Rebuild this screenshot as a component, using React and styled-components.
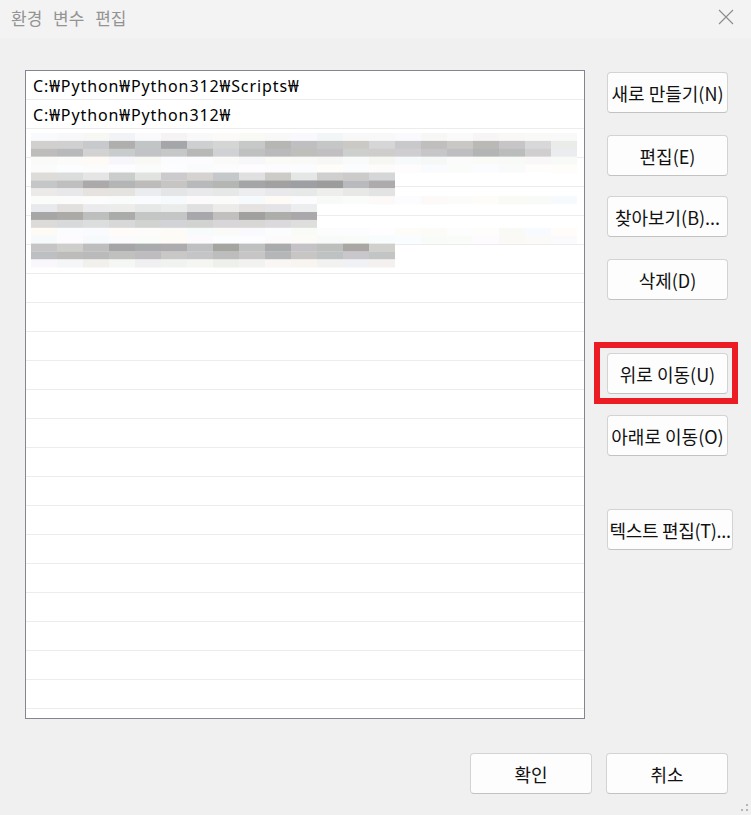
import React from "react";
import styled, { createGlobalStyle } from "styled-components";

const Global = createGlobalStyle`
  html, body { margin: 0; padding: 0; background: #f0f0f0; }
  #root { width: 751px; height: 815px; }
`;

const Window = styled.div`
  position: relative;
  width: 751px;
  height: 815px;
  background: #f0f0f0;
  display: flex;
  flex-direction: column;
  overflow: hidden;
  font-family: "Noto Sans CJK KR", sans-serif;
`;

const TitleBar = styled.div`
  height: 38px;
  flex: none;
  background: #f3f3f3;
  display: flex;
  align-items: center;
  justify-content: space-between;
  padding: 0 17px 0 11px;
`;

const Title = styled.span`
  font-family: "Noto Sans CJK KR", sans-serif;
  font-size: 17px;
  word-spacing: 7px;
  color: #939393;
  line-height: 1;
  margin-top: -4px;
`;

const CloseIcon = styled.svg`
  width: 16px;
  height: 16px;
  margin-top: -4px;
`;

const Body = styled.div`
  display: flex;
  align-items: flex-start;
  padding: 32px 0 0 25px;
`;

const ListBox = styled.div`
  position: relative;
  width: 560px;
  height: 649px;
  box-sizing: border-box;
  border: 1px solid #858592;
  background: #ffffff;
  overflow: hidden;
`;

const Row = styled.div`
  height: 26px;
  border-bottom: 1px solid #ececec;
  padding: 2px 0 0 7px;
  box-sizing: content-box;
  font-family: "Noto Sans", "Noto Sans CJK KR", sans-serif;
  font-size: 16px;
  letter-spacing: 0.9px;
  line-height: 26px;
  color: #000;
  white-space: nowrap;
`;

const Mosaic = styled.svg`
  position: absolute;
  left: 5px;
  top: 62px;
  display: block;
`;

const SideColumn = styled.div`
  display: flex;
  flex-direction: column;
  align-items: flex-start;
  margin-left: 22px;
  padding-top: 2px;
`;

const Button = styled.button`
  flex: none;
  width: ${(p) => p.$w || 121}px;
  height: 41px;
  margin-top: ${(p) => p.$mt || 0}px;
  padding: 0;
  box-sizing: border-box;
  background: #fdfdfd;
  border: 1px solid #d3d3d3;
  border-bottom-color: #c2c2c2;
  border-radius: 4px;
  font-family: "Noto Sans CJK KR", sans-serif;
  font-size: 18px;
  letter-spacing: ${(p) => p.$ls || 0}px;
  color: #111;
  display: flex;
  align-items: center;
  justify-content: center;
  white-space: nowrap;
  overflow: hidden;
`;

const Highlight = styled.div`
  position: relative;
  margin-top: ${(p) => p.$mt || 0}px;
  &::after {
    content: "";
    position: absolute;
    left: -13px;
    top: -11px;
    right: -10px;
    bottom: -10px;
    border: 6px solid #ec1c24;
    pointer-events: none;
  }
`;

const Footer = styled.div`
  display: flex;
  justify-content: flex-end;
  gap: 14px;
  padding-right: 23px;
  margin-top: 34px;
`;

const Grip = styled.svg`
  position: absolute;
  right: 2px;
  bottom: 2px;
`;

function makeRng(seed) {
  let s = seed;
  return () => {
    s = (s * 1103515245 + 12345) & 0x7fffffff;
    return s / 0x7fffffff;
  };
}

const mosaicRows = [
  [21, 243, 251],
  [21, 158, 215],
  [21, 175, 210],
  [21, 246, 252],
  [21, 251, 253],
  [14, 200, 232],
  [14, 150, 198],
  [14, 226, 240],
  [21, 249, 252],
  [11, 224, 238],
  [11, 160, 198],
  [11, 210, 226],
  [21, 250, 253],
  [21, 249, 253],
  [14, 160, 212],
  [14, 176, 202],
  [14, 238, 251],
];

function buildMosaic() {
  const rng = makeRng(9187);
  const cells = [];
  const rh = 7.9;
  mosaicRows.forEach(([cols, lo, hi], r) => {
    for (let c = 0; c < cols; c++) {
      let v = Math.round(lo + rng() * (hi - lo));
      if (r <= 3 && c === 20) v = Math.max(v, 236);
      const tr = Math.round((rng() - 0.5) * 6);
      const tb = Math.round((rng() - 0.5) * 8);
      const col = `rgb(${Math.min(255, v + tr)},${v},${Math.min(255, v + tb)})`;
      cells.push(
        <rect
          key={`${r}-${c}`}
          x={c * 26}
          y={Math.round(r * rh * 10) / 10}
          width={26}
          height={rh + 0.2}
          fill={col}
        />
      );
    }
  });
  return cells;
}

const mosaicCells = buildMosaic();

const paths = ["C:₩Python₩Python312₩Scripts₩", "C:₩Python₩Python312₩"];

export default function App() {
  const rows = Array.from({ length: 23 }, (_, i) => paths[i] || "");
  return (
    <>
      <Global />
      <Window>
        <TitleBar>
          <Title>환경 변수 편집</Title>
          <CloseIcon viewBox="0 0 16 16">
            <path d="M1 1 L15 15 M15 1 L1 15" stroke="#8c8c8c" strokeWidth="1.1" fill="none" />
          </CloseIcon>
        </TitleBar>
        <Body>
          <ListBox>
            {rows.map((t, i) => (
              <Row key={i}>{t}</Row>
            ))}
            <Mosaic width="546" height="135" viewBox="0 0 546 135">
              {mosaicCells}
            </Mosaic>
          </ListBox>
          <SideColumn>
            <Button>새로 만들기(N)</Button>
            <Button $mt={22}>편집(E)</Button>
            <Button $mt={20}>찾아보기(B)...</Button>
            <Button $mt={22}>삭제(D)</Button>
            <Highlight $mt={53}>
              <Button>위로 이동(U)</Button>
            </Highlight>
            <Button $mt={21}>아래로 이동(O)</Button>
            <Button $mt={53} $w={126} $ls={-0.3}>텍스트 편집(T)...</Button>
          </SideColumn>
        </Body>
        <Footer>
          <Button $w={122}>확인</Button>
          <Button $w={122}>취소</Button>
        </Footer>
        <Grip width="9" height="9" viewBox="0 0 9 9">
          <rect x="6" y="0" width="2" height="2" fill="#b5b5b5" />
          <rect x="6" y="5" width="2" height="2" fill="#b5b5b5" />
          <rect x="1" y="5" width="2" height="2" fill="#b5b5b5" />
        </Grip>
      </Window>
    </>
  );
}
